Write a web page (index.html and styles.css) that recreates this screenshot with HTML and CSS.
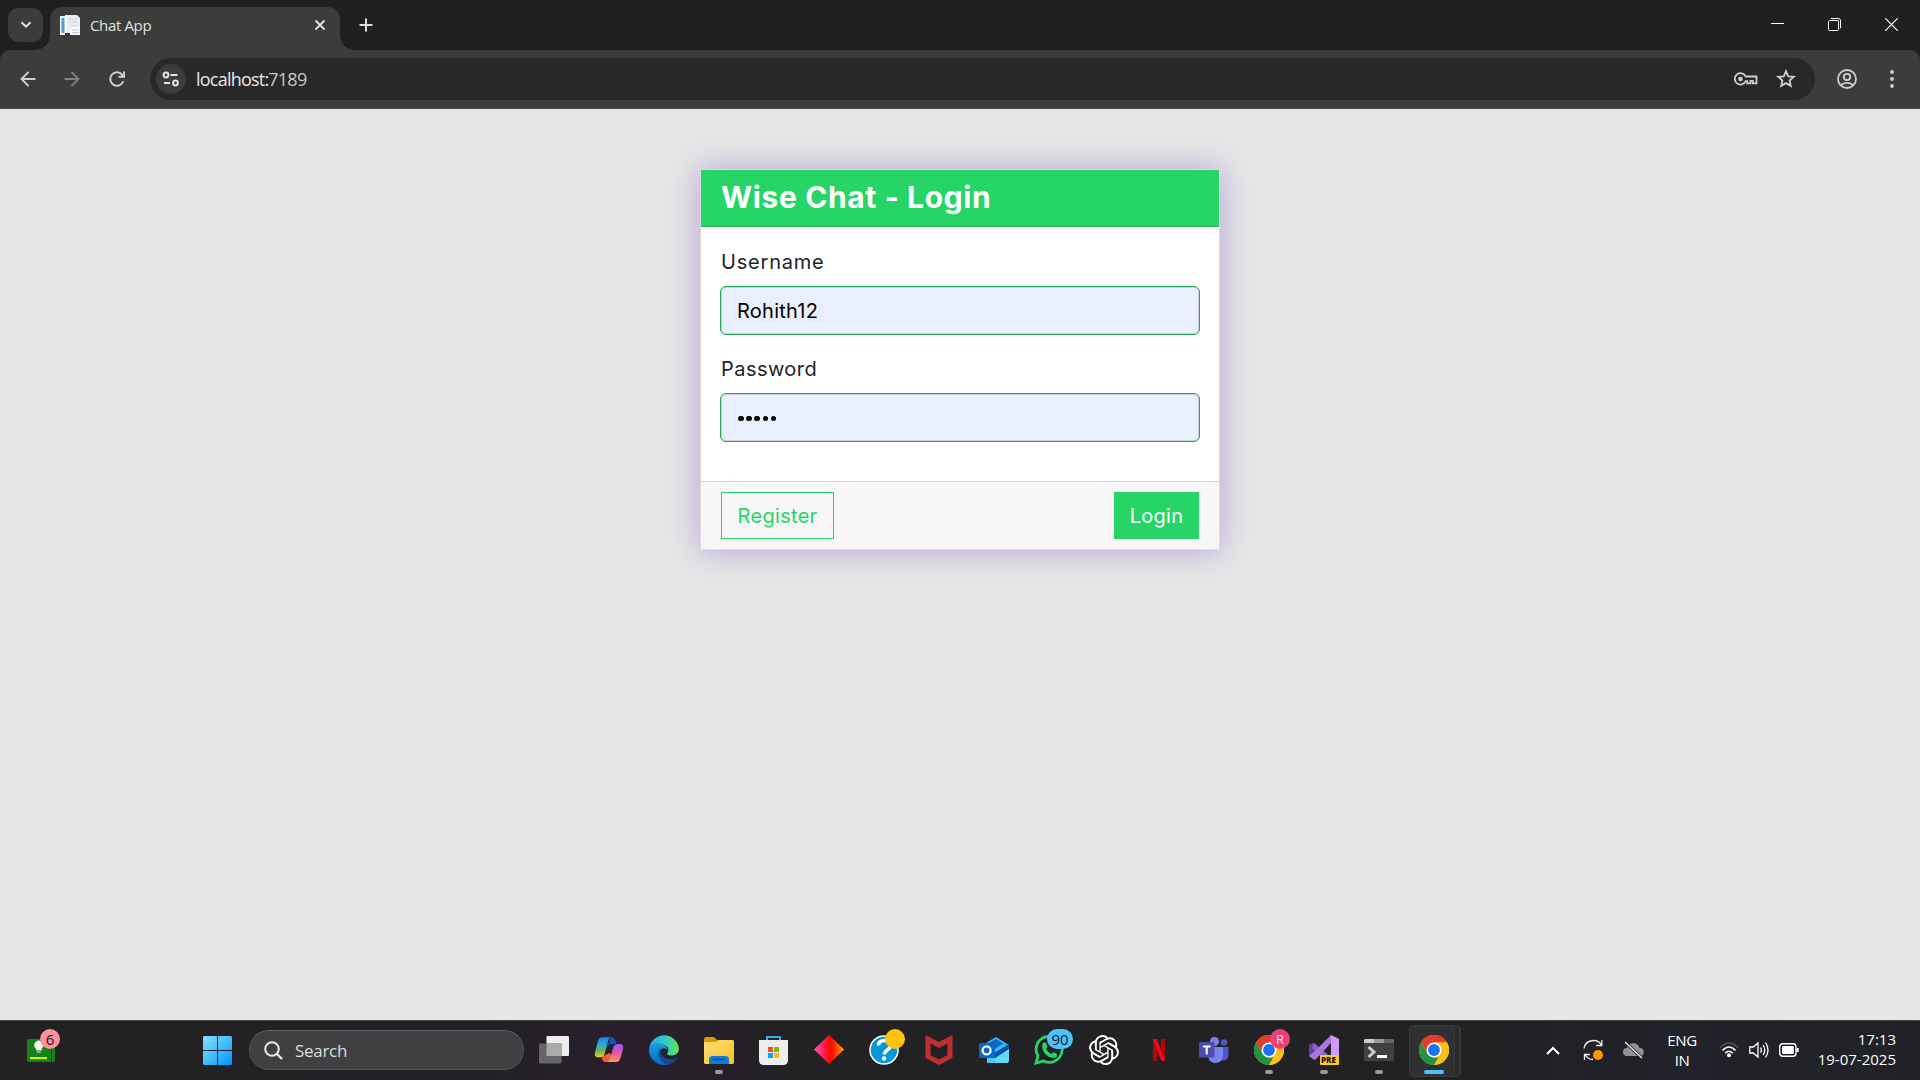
FILE: index.html
```html
<!DOCTYPE html>
<html lang="en">
<head>
<meta charset="utf-8">
<title>Chat App</title>
<link rel="stylesheet" href="styles.css">
</head>
<body>
<div class="screen">
  <header class="tabstrip">
    <button class="tab-search"><svg width="12" height="8" viewBox="0 0 12 8"><path d="M1.5 1.2 6 5.7l4.500-4.500" fill="none" stroke="#e3e3e3" stroke-width="2"/></svg></button>
    <div class="tab">
      <svg class="favicon" width="20" height="20" viewBox="0 0 20 20"><path d="M0 1h5v19H0z" fill="#eef3f7"/><path d="M1.500 3h3v15h-3z" fill="#4a9fd0"/><path d="M5 0h12l3 3v15H6z" fill="#eceef6"/><path d="M5 0h2v18H5z" fill="#fff"/><path d="M8 4h9M8 7h9" stroke="#cfd3de"/><path d="M10 11h8l2 2v7H10z" fill="#f9f9fd"/><path d="M10 11h8M12 15h7M12 17.500h7" stroke="#c5cbd6"/></svg>
      <span class="tab-title">Chat App</span>
      <svg class="tab-close" width="12" height="12" viewBox="0 0 12 12"><path d="m1.500 1.500 9 9m0-9-9 9" stroke="#e3e3e3" stroke-width="1.900"/></svg>
    </div>
    <svg class="new-tab" width="14" height="14" viewBox="0 0 14 14"><path d="M7 .5v13M.5 7h13" stroke="#dcdcdc" stroke-width="2"/></svg>
    <div class="window-controls">
      <svg width="13" height="13" viewBox="0 0 13 13"><path d="M0 5.500h13" stroke="#fff"/></svg>
      <svg width="13" height="13" viewBox="0 0 13 13" fill="none" stroke="#fff"><path d="M2.500 1 3 .5h7.500q2 0 2 2V10l-.5.500" /><path d="M10.500 2.500v9" stroke="#999"/><rect x=".5" y="2.500" width="10" height="10" rx="1"/></svg>
      <svg width="13" height="13" viewBox="0 0 13 13"><path d="m.3.3 12.400 12.400M12.700.3.300 12.700" stroke="#fff" stroke-width="1.200"/></svg>
    </div>
  </header>
  <div class="toolbar-row">
  <nav class="toolbar">
    <svg class="nav-icon" width="16" height="16" viewBox="0 0 16 16" fill="none" stroke="#cfcfcf" stroke-width="1.900"><path d="M15.500 8H1.800M8.500 1 1.500 8l7 7"/></svg>
    <svg class="nav-icon" width="16" height="16" viewBox="0 0 16 16" fill="none" stroke="#808080" stroke-width="1.900"><path d="M.5 8h13.700M7.500 1l7 7-7 7"/></svg>
    <svg class="nav-icon" width="16" height="16" viewBox="0 0 16 16" fill="none" stroke="#cfcfcf" stroke-width="2"><path d="M14.300 10.200a6.700 6.700 0 1 1-1-6.200L15 5.800M15 .5v5.300H9.500"/></svg>
    <div class="omnibox">
      <span class="site-info"><svg width="18" height="16" viewBox="0 0 18 16" fill="none" stroke="#e3e3e3" stroke-width="2"><circle cx="4" cy="4" r="2.400"/><path d="M8.500 4h7M2 12h6"/><circle cx="13.500" cy="12" r="2.400"/></svg></span>
      <span class="url">localhost:<span class="port">7189</span></span>
      <svg class="key" width="24" height="14" viewBox="0 0 24 14" fill="none" stroke="#cfcfcf" stroke-width="1.800"><path d="M11.700 4.500h10.800v6.800h-3.700V8.800h-2.300v2.500h-3.300V9.200h-1.500A5.700 5.700 0 1 1 11.700 4.500z"/><circle cx="6.500" cy="7" r="2.300" fill="#cfcfcf" stroke="none"/></svg>
      <svg class="star" width="20" height="19" viewBox="0 0 20 19"><path d="m10 2.200 2.200 5.100 5.600.5-4.200 3.700 1.200 5.400-4.800-2.800-4.800 2.800 1.200-5.400L2.200 7.800l5.600-.5z" fill="none" stroke="#cfcfcf" stroke-width="1.800"/></svg>
    </div>
    <svg class="profile" width="20" height="20" viewBox="0 0 20 20" fill="none" stroke="#cfcfcf" stroke-width="1.800"><circle cx="10" cy="10" r="9"/><circle cx="10" cy="8" r="3.200"/><path d="M3.800 16q6.200-4.200 12.400 0"/></svg>
    <svg class="dots" width="4" height="18" viewBox="0 0 4 18" fill="#cfcfcf"><circle cx="2" cy="2" r="1.900"/><circle cx="2" cy="9" r="1.900"/><circle cx="2" cy="16" r="1.900"/></svg>
  </nav>
  </div>
  <main class="page">
    <form class="card">
      <h1 class="card-header">Wise Chat - Login</h1>
      <div class="card-body">
        <label class="label label-user" for="user">Username</label>
        <input class="field" id="user" type="text" value="Rohith12">
        <label class="label label-pass" for="pass">Password</label>
        <div class="field secret" id="pass"><i></i><i></i><i></i><i></i><i></i></div>
      </div>
      <div class="card-footer">
        <button class="btn btn-outline" type="button">Register</button>
        <button class="btn btn-solid" type="button">Login</button>
      </div>
    </form>
  </main>
  <footer class="taskbar">
    <div class="widget"><svg width="28" height="23" viewBox="0 0 28 23"><rect width="28" height="23" rx="1.500" fill="#16811a"/><path d="M24.500 0v23" stroke="#0a5714"/><path d="M3 18h17v2.200H3z" fill="#c9f00b"/><path d="M9.300 11V9.500a4.200 4.200 0 1 1 5 0V11zM9.800 13h4" fill="#f5fff0" stroke="#f5fff0" stroke-width=".9"/></svg><span class="badge badge-pink">6</span></div>
    <svg class="start" width="29" height="29" viewBox="0 0 29 29"><defs><linearGradient id="win" x2="29" y2="29" gradientUnits="userSpaceOnUse"><stop stop-color="#85e0fc"/><stop offset=".5" stop-color="#45bdfb"/><stop offset="1" stop-color="#0090fc"/></linearGradient></defs><path d="M1 0h13v14H0V1zM15 0h13l1 1v13H15zM0 15h14v14H1l-1-1zM15 15h14v13l-1 1H15z" fill="url(#win)"/></svg>
    <div class="search"><svg width="19" height="19" viewBox="0 0 19 19" fill="none" stroke="#e8e8e8" stroke-width="2"><circle cx="8" cy="8" r="6.800"/><path d="m13 13 5 5" stroke-width="2.400"/></svg><span>Search</span></div>
    <div class="apps">
      <div class="app"><svg width="30" height="30" viewBox="0 0 30 30"><rect x="7.500" y="1" width="22.500" height="20" rx="1" fill="#eee"/><rect y="8.500" width="22.500" height="20" rx="1" fill="#666"/><path d="M7.500 8.500h15V21h-15z" fill="#aaa"/></svg></div>
      <div class="app"><svg width="30" height="30" viewBox="0 0 30 30"><defs><linearGradient id="cp1" x2="0" y2="1"><stop stop-color="#1686ee"/><stop offset=".35" stop-color="#2aa8d8"/><stop offset=".7" stop-color="#6db956"/><stop offset="1" stop-color="#f2cb13"/></linearGradient><linearGradient id="cp2" x2="0" y2="1"><stop stop-color="#9658ed"/><stop offset=".5" stop-color="#e354ae"/><stop offset="1" stop-color="#ff9a48"/></linearGradient></defs><path d="M17 2.300q4 0 4.700 4.500l.8 2.500h-7l-3 3z" fill="#1551cc"/><path d="M8 22q0 5 3.500 5h4l3-6-3.500-3z" fill="#f45b35"/><path d="M8.500 2.300h9.500q-3 0-4 4L10.600 19q-1 3.300-4 3.300H3.500q-3.300 0-2.500-4.800L4 6q1-3.700 4.500-3.700z" fill="url(#cp1)"/><path d="M22 27H12q3 0 4-4l3.300-10.500Q20.300 9 24 9h2q4 0 3 5l-2.500 9q-1 4-4.500 4z" fill="url(#cp2)"/></svg></div>
      <div class="app"><svg width="30" height="30" viewBox="0 0 30 30"><defs><linearGradient id="ed1"><stop stop-color="#2aa9e8"/><stop offset=".5" stop-color="#2fc6cf"/><stop offset="1" stop-color="#66e34b"/></linearGradient><linearGradient id="ed2" x2="0" y2="1"><stop stop-color="#1b9de2"/><stop offset="1" stop-color="#0669c5"/></linearGradient></defs><path d="M.3 13A15 15 0 0 1 30 13.500c0 5-4 7-7.500 7-4 0-5-1.500-4-2.800 2-3 .4-6.700-3.500-7.700C9 9 5 9 .3 13z" fill="url(#ed1)"/><path d="M.2 13C2 9 7 6.500 12 8.500c4 1.400 6.500 4 6.400 6.500-3-3-6-1.500-7 1.500-1.300 5 3.600 12 10 12A15 15 0 0 1 .2 13z" fill="url(#ed2)"/><path d="M12.500 12.500C7 16 9 26 17 29.700c5 .2 9.500-3.500 11.500-7-9 4-15.800-.5-16.800-4.700-.4-2 0-4 .8-5.500z" fill="#124b94"/></svg></div>
      <div class="app run"><svg width="30" height="30" viewBox="0 0 30 30"><defs><linearGradient id="fo" x2="1" y2="1"><stop stop-color="#ffe07a"/><stop offset="1" stop-color="#f8bd25"/></linearGradient></defs><path d="M0 3.500 1.500 2H10l3 3H28v9H0z" fill="#dc9700"/><path d="M0 7h12l3-2h14l1 1v22l-1 1H1l-1-1z" fill="url(#fo)"/><path d="M5 29v-4.500Q5 21 8.500 21h13q3.500 0 3.500 3.500V29z" fill="#157bd0"/><path d="M9 24.500h12" stroke="#0b4a90" stroke-width="1.500"/></svg></div>
      <div class="app"><svg width="29" height="30" viewBox="0 0 29 30"><path d="M8 8V2h13v6" fill="none" stroke="#28b3ef" stroke-width="2"/><path d="M0 5h29v20q0 5-5 5H5q-5 0-5-5z" fill="#eee"/><path d="M9 12h5v5H9z" fill="#f04e23"/><path d="M15 12h5v5h-5z" fill="#80ba01"/><path d="M9 18h5v5H9z" fill="#02a4ef"/><path d="M15 18h5v5h-5z" fill="#ffb902"/></svg></div>
      <div class="app"><svg width="30" height="30" viewBox="0 0 30 30"><defs><linearGradient id="di"><stop stop-color="#ff4bd3"/><stop offset=".5" stop-color="#ff0909"/><stop offset=".6" stop-color="#ff0c05"/><stop offset="1" stop-color="#ffa80b"/></linearGradient></defs><path d="m15 0 15 14.500L15 29 0 14.500z" fill="url(#di)"/></svg></div>
      <div class="app"><svg width="30" height="30" viewBox="0 0 30 30"><circle cx="15" cy="15" r="14" fill="#0796d8" stroke="#f4fbff" stroke-width="1.600"/><path d="M9.500 10.500q0-5 6-5 6 0 6 4.500 0 3-3.500 5.300-2.500 1.700-2.500 4.200" fill="none" stroke="#fff" stroke-width="3.500"/><circle cx="15" cy="23.500" r="2.300" fill="#fff"/></svg><span class="badge badge-yellow"></span></div>
      <div class="app"><svg width="28" height="30" viewBox="0 0 28 30"><path d="m.5 0 13.500 7L27.500 0v23L14 30 .5 23zM5.500 8.500V20L14 24.500l8.500-4.500V8.500L14 13z" fill="#c12e2e" fill-rule="evenodd"/></svg></div>
      <div class="app"><svg width="30" height="30" viewBox="0 0 30 30"><path d="M5 9 17 2l13 8v9H5z" fill="#35b9f1"/><path d="m6 10 11-6 7 4.500-15 10z" fill="#1266c6"/><path d="m12 20 18-11v6L18 24z" fill="#0b50a6"/><path d="M8 28V18l8 5 14-9v11q0 3-3 3z" fill="#45c9f2"/><path d="m16 24 14-10v11q0 3-3 3H16z" fill="#62dcf6"/><rect y="8" width="16" height="15" rx="1" fill="#0868c7"/><circle cx="7.600" cy="15.400" r="4" fill="none" stroke="#fff" stroke-width="2.300"/></svg></div>
      <div class="app"><svg width="30" height="30" viewBox="0 0 30 30"><path d="m2 28 2-7A13 13 0 1 1 9.500 26z" fill="none" stroke="#25d366" stroke-width="2.800"/><path d="m10 7.500 2 .3 1.500 4-1.500 2q2 4 5.500 5.300l2-2 3.500 1.800q.6 4-4 4Q9 21.500 8 11q.2-2.700 2-3.500z" fill="#25d366"/></svg><span class="badge badge-blue">90</span></div>
      <div class="app"><svg width="30" height="30" viewBox="0 0 24 24"><path fill="#fff" d="M22.2819 9.8211a5.9847 5.9847 0 0 0-.5157-4.9108 6.0462 6.0462 0 0 0-6.5098-2.9A6.0651 6.0651 0 0 0 4.9807 4.1818a5.9847 5.9847 0 0 0-3.9977 2.9 6.0462 6.0462 0 0 0 .7427 7.0966 5.98 5.98 0 0 0 .511 4.9107 6.051 6.051 0 0 0 6.5146 2.9001A5.9847 5.9847 0 0 0 13.2599 24a6.0557 6.0557 0 0 0 5.7718-4.2058 5.9894 5.9894 0 0 0 3.9977-2.9001 6.0557 6.0557 0 0 0-.7475-7.0729zm-9.022 12.6081a4.4755 4.4755 0 0 1-2.8764-1.0408l.1419-.0804 4.7783-2.7582a.7948.7948 0 0 0 .3927-.6813v-6.7369l2.02 1.1686a.071.071 0 0 1 .038.052v5.5826a4.504 4.504 0 0 1-4.4945 4.4944zm-9.6607-4.1254a4.4708 4.4708 0 0 1-.5346-3.0137l.142.0852 4.783 2.7582a.7712.7712 0 0 0 .7806 0l5.8428-3.3685v2.3324a.0804.0804 0 0 1-.0332.0615L9.74 19.9502a4.4992 4.4992 0 0 1-6.1408-1.6464zM2.3408 7.8956a4.485 4.485 0 0 1 2.3655-1.9728V11.6a.7664.7664 0 0 0 .3879.6765l5.8144 3.3543-2.0201 1.1685a.0757.0757 0 0 1-.071 0l-4.8303-2.7865A4.504 4.504 0 0 1 2.3408 7.872zm16.5963 3.8558L13.1038 8.364 15.1192 7.2a.0757.0757 0 0 1 .071 0l4.8303 2.7913a4.4944 4.4944 0 0 1-.6765 8.1042v-5.6772a.79.79 0 0 0-.407-.667zm2.0107-3.0231l-.142-.0852-4.7735-2.7818a.7759.7759 0 0 0-.7854 0L9.409 9.2297V6.8974a.0662.0662 0 0 1 .0284-.0615l4.8303-2.7866a4.4992 4.4992 0 0 1 6.6802 4.66zM8.3065 12.863l-2.02-1.1638a.0804.0804 0 0 1-.038-.0567V6.0742a4.4992 4.4992 0 0 1 7.3757-3.4537l-.142.0805L8.704 5.459a.7948.7948 0 0 0-.3927.6813zm1.0976-2.3654l2.602-1.4998 2.6069 1.4998v2.9994l-2.5974 1.4997-2.6067-1.4997Z"/></svg></div>
      <div class="app"><svg width="12" height="22" viewBox="0 0 12 22"><path d="M0 0h4v21.500L0 22zM8 0h4v22l-4-.5z" fill="#b1060f"/><path d="M0 0h4l8 22-4-.5z" fill="#f00a16"/></svg></div>
      <div class="app"><svg width="30" height="30" viewBox="0 0 30 30"><circle cx="25" cy="7.500" r="3.300" fill="#4f56bd"/><circle cx="15.500" cy="6.500" r="4.500" fill="#7b83eb"/><path d="M22 12h7.500v8q0 5-5 5.500H20z" fill="#4f58c4"/><path d="M9 12h15v9q-1 7-7.500 7T9 21z" fill="#7b83eb"/><rect y="7" width="15.500" height="15.500" rx="1" fill="#474db3"/><path d="M4 11.500h7.500M7.700 11.500v8" stroke="#fff" stroke-width="2"/></svg></div>
      <div class="app run"><svg width="30" height="30" viewBox="0 0 30 30"><use href="#chrome"/></svg><span class="badge badge-user">R</span></div>
      <div class="app run"><svg width="30" height="30" viewBox="0 0 30 30"><path d="M0 10 5 8l17 14v7L5 13v10l-5-2z" fill="#794bb5"/><path d="M0 10 5 8l5 5-5 12-5-4z" fill="#6b3da6"/><path d="m5 8 17 15v6L12 22l-9-9z" fill="#8f5fd0"/><path d="M22 0v8L6 25l-6-4 5-4z" fill="#a877e3"/><path d="m22 0 8 4v22l-8 4z" fill="#d099fc"/><rect x="11" y="20" width="19" height="10" rx="1" fill="#fdc72b"/></svg><span class="pre">PRE</span></div>
      <div class="app run"><svg width="30" height="22" viewBox="0 0 30 22"><rect width="30" height="22" rx="1.500" fill="#414141"/><path d="M0 4V1l1-1h9v4z" fill="#ccc"/><path d="M10 0h10v4H10z" fill="#999"/><path d="M20 0h9l1 1v3H20z" fill="#666"/><path d="m4.500 8 5.500 5-5.500 5" fill="none" stroke="#d0d0d0" stroke-width="3"/><path d="M13 17.500h10" stroke="#fff" stroke-width="3"/></svg></div>
      <div class="app active"><svg width="30" height="30" viewBox="0 0 30 30"><g id="chrome"><circle cx="15" cy="15" r="15" fill="#fbc116"/><path d="M2 7.500A15 15 0 0 1 28 7.500H15L8.500 18.750z" fill="#e33b2e"/><path d="M2 7.500 8.500 18.750 15 22.500h6.500L15 30A15 15 0 0 1 2 7.500z" fill="#229342"/><path d="M28 7.500A15 15 0 0 1 15 30l6.500-11.250L22 11 15 7.500z" fill="#fbc116"/><circle cx="15" cy="15" r="7.500" fill="#fff"/><circle cx="15" cy="15" r="5.900" fill="#1a73e8"/></g></svg></div>
    </div>
    <div class="tray">
      <svg class="chevron" width="14" height="9" viewBox="0 0 14 9"><path d="m1 8 6-6 6 6" fill="none" stroke="#fff" stroke-width="2"/></svg>
      <svg class="sync" width="20" height="22" viewBox="0 0 20 22" fill="none" stroke="#eee" stroke-width="1.300"><path d="M1 9.500C2 1 14-1.500 18.500 6M18.800 1v5.500H13M10 20.500q-5 0-8-5M1.500 21v-5.500H7"/><circle cx="15" cy="16" r="5" fill="#ff9800" stroke="none"/></svg>
      <svg class="cloud" width="21" height="18" viewBox="0 0 21 18"><path d="M4 15a4 4 0 0 1 0-8 6.500 6.500 0 0 1 12.500 0A4 4 0 0 1 17 15z" fill="#929292"/><path d="m2 1 17 16" stroke="#222" stroke-width="3"/><path d="m2 1 17 16" stroke="#eee" stroke-width="1.300"/></svg>
      <div class="lang"><span>ENG</span><span>IN</span></div>
      <svg class="wifi" width="20" height="16" viewBox="0 0 20 16" fill="none" stroke="#fff" stroke-width="1.500"><path d="M.8 6Q10-4 19.200 6" stroke="#555"/><path d="M3.500 8.500q6.500-7 13 0M6.300 11.300q3.700-4 7.400 0"/><circle cx="10" cy="13.300" r="2" fill="#fff" stroke="none"/></svg>
      <svg class="sound" width="20" height="18" viewBox="0 0 20 18" fill="none" stroke="#fff" stroke-width="1.300"><path d="M.8 6h3.500L9 2v14l-4.700-4H.8zM11.500 6.500q1.800 2.500 0 5M14 4q3.500 5 0 10M16.500 1.500q5 7.500 0 15"/></svg>
      <svg class="battery" width="20" height="14" viewBox="0 0 20 14"><rect x=".7" y=".7" width="16.300" height="12.600" rx="3" fill="none" stroke="#fff" stroke-width="1.400"/><rect x="3" y="3" width="11.800" height="8" rx="1" fill="#fff"/><path d="M18.700 5v4" stroke="#fff" stroke-width="2"/></svg>
      <div class="clock"><span>17:13</span><span>19-07-2025</span></div>
    </div>
  </footer>
</div>
</body>
</html>
```
FILE: styles.css
```css
* { box-sizing: border-box; }
body { margin: 0; overflow: hidden; font-family: "Open Sans", "Noto Sans", sans-serif; }
svg { display: block; flex: none; }
button { font: inherit; padding: 0; border: 0; }
.screen { width: 1920px; height: 1080px; display: flex; flex-direction: column; background: #e6e6e6; }

/* Browser window */
.tabstrip { height: 50px; flex: none; display: flex; background: #1f2120; padding-left: 8px; }
.tab-search { width: 35px; height: 34px; margin-top: 8px; border-radius: 11px; background: #3c3c3c; display: flex; align-items: center; justify-content: center; }
.tab { position: relative; width: 290px; height: 43px; margin: 7px 0 0 7px; padding: 0 14px 7px 10px; border-radius: 12px 12px 0 0; background: #3c3c3c; display: flex; align-items: center; }
.tab::before, .tab::after { content: ""; position: absolute; bottom: 0; width: 14px; height: 14px; }
.tab::before { left: -14px; background: radial-gradient(circle at 0 0, transparent 13.500px, #3c3c3c 14px); }
.tab::after { right: -14px; background: radial-gradient(circle at 100% 0, transparent 13.500px, #3c3c3c 14px); }
.tab-title { margin-left: 10px; font-size: 15px; letter-spacing: -.35px; line-height: 20px; color: #e3e3e3; }
.tab-close { margin-left: auto; }
.new-tab { margin: 18px 0 0 19px; }
.window-controls { margin-left: auto; padding: 18px 22px 0 0; display: flex; gap: 44px; }
.toolbar-row { flex: none; background: #1f2120; }
.toolbar { height: 59px; padding: 0 26px 2px 20px; display: flex; align-items: center; background: #3c3c3c; box-shadow: inset 0 -1px #4a4848; border-radius: 10px 10px 0 0; }
.nav-icon { margin-right: 29px; }
.nav-icon:first-child { margin-right: 28px; }
.omnibox { width: 1665px; height: 42px; padding: 0 19px 0 6px; border-radius: 21px; background: #282828; display: flex; align-items: center; }
.nav-icon + .omnibox { margin-left: -4px; }
.site-info { width: 30px; height: 30px; border-radius: 50%; background: #3c3c3c; display: flex; align-items: center; justify-content: center; }
.url { margin-left: 10px; font-size: 18px; letter-spacing: -.78px; color: #e8e8e8; }
.port { color: #c7c7c7; }
.key { margin-left: auto; }
.star { margin-left: 18px; }
.profile { margin-left: 22px; }
.dots { margin-left: auto; }

/* Login form */
.page { height: 911px; flex: none; padding-top: 60px; display: flex; justify-content: center; align-items: flex-start; }
.card { width: 520px; height: 381px; display: flex; flex-direction: column; background: #fff; border: 1px solid #dcdcdf; box-shadow: 0 0 30px rgba(125, 75, 200, .45); font-family: Inter, sans-serif; }
.card-header { height: 57px; flex: none; margin: 0; padding: 0 20px; background: #27d567; border-bottom: 1px solid #21b557; color: #fff; font-size: 30px; font-weight: 700; line-height: 55px; letter-spacing: .63px; }
.card-body { flex: 1; padding: 20px 19px; display: flex; flex-direction: column; }
.label { height: 30px; margin: 0 1px 9px; font-size: 20px; line-height: 30px; color: #212529; }
.label-user { letter-spacing: .8px; }
.label-pass { margin-top: 19px; letter-spacing: .45px; }
.field { width: 480px; height: 49px; padding: 0 16px; border: 1px solid #28a851; border-radius: 6px; background: #e8effd; box-shadow: inset 0 0 0 1px #c5d0d8; color: #000; font: 20px Inter, sans-serif; letter-spacing: .25px; display: flex; align-items: center; }
.secret { gap: 2.700px; padding: 2px 0 0 17px; }
.secret i { width: 5.500px; height: 5.500px; border-radius: 50%; background: #000; }
.card-footer { height: 68px; flex: none; padding: 0 20px; border-top: 1px solid #d7d7d7; background: #f7f7f7; display: flex; align-items: center; justify-content: space-between; }
.btn { height: 47px; font-size: 20px; border: 1px solid #27d567; letter-spacing: .3px; }
.btn-outline { width: 113px; background: none; color: #27d567; }
.btn-solid { width: 85px; background: #27d567; color: #fff; }

/* Desktop taskbar */
.taskbar { height: 60px; flex: none; padding-bottom: 1px; display: flex; align-items: center; background: linear-gradient(90deg, #222 0, #222126 24%, #291f2b 33%, #222124 41%, #222223 75%, #21222a 87%, #222226 100%); border-top: 1px solid #414344; color: #fff; }
.widget { position: relative; margin-left: 27px; }
.badge { position: absolute; height: 20px; border-radius: 10px; display: flex; align-items: center; justify-content: center; color: #171717; font-size: 15px; }
.badge-pink { width: 20px; left: 13px; top: -10px; background: #ff929f; }
.start { margin-left: 148px; }
.search { width: 275px; height: 40px; margin-left: 17px; padding-left: 14px; border-radius: 20px; border: 1px solid #505052; border-top-color: #626265; background: #404043; display: flex; align-items: center; gap: 12px; font-size: 17px; letter-spacing: -.3px; color: #ddd; }
.apps { margin-left: 2px; display: grid; grid-template-columns: repeat(17, 55px); height: 58px; }
.app { position: relative; display: flex; align-items: center; justify-content: center; }
.app > svg { position: relative; }
.run::after { content: ""; position: absolute; bottom: 5px; left: 23.500px; width: 8px; height: 4px; border-radius: 2px; background: #999; }
.badge-yellow { width: 20px; left: 29px; top: 8px; background: #ffc20e; }
.badge-blue { width: 26px; left: 26px; top: 8px; background: #4cc2ff; }
.badge-user { width: 20px; left: 29px; top: 8px; background: #ec407a; color: #ffe0e9; font-size: 13px; }
.pre { position: absolute; left: 23px; top: 34px; width: 19px; text-align: center; font-size: 8px; line-height: 10px; font-weight: 800; color: #28200c; }
.active::before { content: ""; position: absolute; left: 3px; top: 4px; width: 44px; height: 50px; border: 1px solid #3b3b3d; border-radius: 5px; background: #303033; box-shadow: 5px 0 0 -1px #29292b, 6px 0 0 #39393b; }
.active::after { content: ""; position: absolute; left: 17.500px; bottom: 5px; width: 20px; height: 4px; border-radius: 2px; background: #4cc2ff; }
.tray { flex: 1; display: flex; align-items: center; padding-left: 85px; font-size: 15px; line-height: 20px; }
.sync { margin-left: 23px; }
.cloud { margin-left: 20px; }
.lang { width: 32px; margin-left: 22px; padding-bottom: 1px; display: flex; flex-direction: column; align-items: center; letter-spacing: -.4px; }
.wifi { margin-left: 21px; }
.sound { margin-left: 10px; }
.battery { margin-left: 10px; }
.clock { margin-left: auto; margin-right: 24px; padding-bottom: 2px; display: flex; flex-direction: column; align-items: flex-end; }
```
